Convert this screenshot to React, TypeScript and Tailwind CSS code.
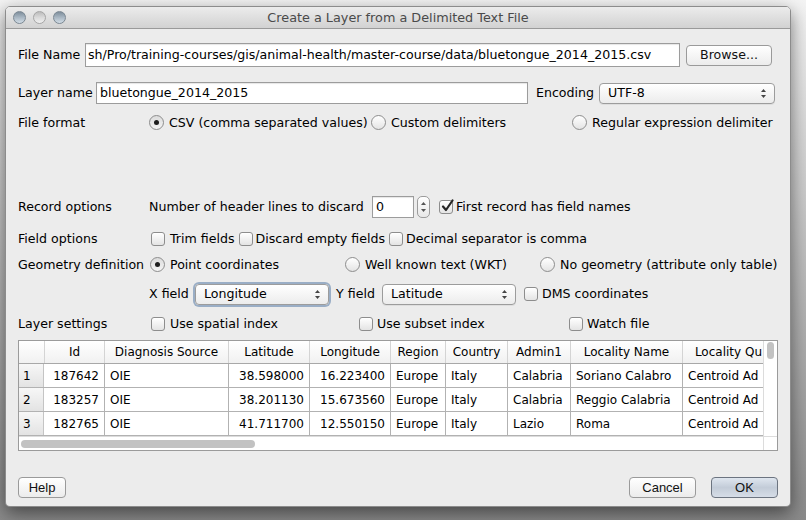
import React from "react";

const ui = "font-['DejaVu_Sans',sans-serif]";

function Checkbox({ checked = false }: { checked?: boolean }) {
  return (
    <span className="relative inline-flex w-[14px] h-[14px] shrink-0 rounded-[3px] border border-[#8d8d8d] bg-gradient-to-b from-white to-[#e4e4e4] shadow-[inset_0_1px_0_#fff]">
      {checked && (
        <svg className="absolute left-[1px] -top-[2px]" width="13" height="14" viewBox="0 0 13 14">
          <path d="M2 7.5 L5 11 L11.5 1.5" fill="none" stroke="#262626" strokeWidth="2.2" strokeLinecap="round" strokeLinejoin="round" />
        </svg>
      )}
    </span>
  );
}

function Radio({ checked = false }: { checked?: boolean }) {
  return (
    <span
      className={`inline-flex items-center justify-center w-[15px] h-[15px] shrink-0 rounded-full border border-[#8d8d8d] bg-gradient-to-b ${
        checked ? "from-[#dcdcdc] to-[#f4f4f4]" : "from-white to-[#e4e4e4]"
      }`}
    >
      {checked && <span className="w-[5px] h-[5px] rounded-full bg-[#1e1e1e]" />}
    </span>
  );
}

function Arrows() {
  return (
    <svg width="7" height="11" viewBox="0 0 7 11">
      <path d="M3.5 1 L6 4 L1 4 Z" fill="#444" />
      <path d="M3.5 10 L6 7 L1 7 Z" fill="#444" />
    </svg>
  );
}

function Select({ value, w, focused = false }: { value: string; w: string; focused?: boolean }) {
  return (
    <div
      className={`${w} h-[21px] flex items-center justify-between pl-[8px] pr-[7px] rounded-[4px] border border-[#9c9c9c] bg-gradient-to-b from-white to-[#ececec] ${
        focused ? "shadow-[0_0_0_2px_#9aaec6]" : "shadow-[0_1px_0_rgba(0,0,0,0.06)]"
      }`}
    >
      <span>{value}</span>
      <Arrows />
    </div>
  );
}

function Button({ label, w, primary = false, narrow = true }: { label: string; w: string; primary?: boolean; narrow?: boolean }) {
  return (
    <div
      className={`${w} h-[21px] flex items-center justify-center rounded-[4px] border text-[#111] ${
        narrow ? "font-['Liberation_Sans',sans-serif] text-[13px]" : ""
      } ${
        primary
          ? "border-[#6c7480] bg-gradient-to-b from-[#dfe6ef] via-[#c3ccd8] to-[#d6dde7]"
          : "border-[#9a9a9a] bg-gradient-to-b from-white to-[#ececec]"
      }`}
    >
      {label}
    </div>
  );
}

const cols = [
  { w: "w-[61px]", h: "Id", align: "text-right" },
  { w: "w-[124px]", h: "Diagnosis Source", align: "text-left" },
  { w: "w-[81px]", h: "Latitude", align: "text-right" },
  { w: "w-[81px]", h: "Longitude", align: "text-right" },
  { w: "w-[55px]", h: "Region", align: "text-left" },
  { w: "w-[62px]", h: "Country", align: "text-left" },
  { w: "w-[63px]", h: "Admin1", align: "text-left" },
  { w: "w-[112px]", h: "Locality Name", align: "text-left" },
  { w: "w-[81px]", h: "Locality Qu", align: "text-left" },
];

const rows = [
  ["187642", "OIE", "38.598000", "16.223400", "Europe", "Italy", "Calabria", "Soriano Calabro", "Centroid Ad"],
  ["183257", "OIE", "38.201130", "15.673560", "Europe", "Italy", "Calabria", "Reggio Calabria", "Centroid Ad"],
  ["182765", "OIE", "41.711700", "12.550150", "Europe", "Italy", "Lazio", "Roma", "Centroid Ad"],
];

function PreviewTable() {
  return (
    <div className="mt-[6px] w-[760px] h-[111px] border border-[#9b9b9b] bg-white text-[12px] flex flex-col">
      <div className="flex h-[95px]">
        <div className="w-[745px] h-[95px] overflow-hidden">
          {/* header */}
          <div className="flex h-[23px] border-b border-[#a8a8a8] bg-gradient-to-b from-white to-[#f1f1f1]">
            <div className="w-[25px] shrink-0" />
            {cols.map((c, i) => (
              <div
                key={c.h}
                className={`${c.w} shrink-0 flex items-center whitespace-nowrap overflow-hidden ${
                  i < cols.length - 1 ? "border-r border-[#d4d4d4] justify-center" : "justify-end pr-[2px]"
                } ${i === 0 ? "border-l border-[#d4d4d4]" : ""}`}
              >
                {c.h}
              </div>
            ))}
          </div>
          {rows.map((r, ri) => (
            <div key={ri} className="flex h-[24px] border-b border-[#b2b2b2]">
              <div className="w-[25px] shrink-0 flex items-center pl-[4px] border-r border-[#c4c4c4] bg-gradient-to-b from-[#f7f7f7] to-[#e3e3e3]">
                {ri + 1}
              </div>
              {r.map((v, ci) => (
                <div
                  key={ci}
                  className={`${cols[ci].w} shrink-0 flex items-center px-[5px] whitespace-nowrap overflow-hidden ${
                    ci < r.length - 1 ? "border-r border-[#b2b2b2]" : ""
                  } ${cols[ci].align === "text-right" ? "justify-end" : "justify-start"}`}
                >
                  {v}
                </div>
              ))}
            </div>
          ))}
        </div>
        <div className="w-[14px] h-[95px] border-l border-[#dcdcdc] bg-white flex justify-center pt-[1px]">
          <div className="w-[7px] h-[17px] rounded-full bg-[#c2c2c2]" />
        </div>
      </div>
      <div className="flex h-[14px] border-t border-[#dcdcdc]">
        <div className="w-[745px] flex items-center pl-[2px]">
          <div className="w-[234px] h-[8px] rounded-full bg-[#c2c2c2]" />
        </div>
        <div className="w-[14px] border-l border-[#dcdcdc]" />
      </div>
    </div>
  );
}

export default function App() {
  return (
    <div className={`w-[806px] h-[520px] overflow-hidden bg-gradient-to-b from-[#f4f4f4] via-[#bdbdbd] to-[#8a8a8a] pt-[6px] pl-[5px] ${ui} text-[12.6px] text-black`}>
      <div className="w-[786px] h-[501px] rounded-[5px] overflow-hidden flex flex-col shadow-[0_6px_18px_rgba(0,0,0,0.5)] border border-[#8c8c8c]">
        {/* title bar */}
        <div className="relative h-[22px] shrink-0 flex items-center justify-center pt-[1px] bg-gradient-to-b from-[#ececec] to-[#d2d2d2] border-b border-[#9a9a9a] text-[#4a4a4a] text-[12.8px]">
          <div className="absolute left-[7px] top-[4px] flex gap-[7px]">
            <span className="w-[13px] h-[13px] rounded-full border border-[#7a8792] bg-gradient-to-b from-[#7e8e9c] via-[#a9b7c3] to-[#d2dde6]" />
            <span className="w-[13px] h-[13px] rounded-full border border-[#a5a5a5] bg-gradient-to-b from-[#bcbcbc] via-[#dadada] to-[#f0f0f0]" />
            <span className="w-[13px] h-[13px] rounded-full border border-[#7a8792] bg-gradient-to-b from-[#7e8e9c] via-[#a9b7c3] to-[#d2dde6]" />
          </div>
          <span>Create a Layer from a Delimited Text File</span>
        </div>

        {/* body */}
        <div className="flex-1 bg-[#ececec] pl-[12px] pr-[12px] flex flex-col">
          {/* File name */}
          <div className="mt-[14px] h-[24px] flex items-center">
            <span className="w-[67px] shrink-0">File Name</span>
            <div className="w-[595px] h-[24px] flex items-center px-[2px] border border-[#9c9c9c] bg-white overflow-hidden whitespace-nowrap shadow-[inset_0_1px_1px_rgba(0,0,0,0.1)]">
              sh/Pro/training-courses/gis/animal-health/master-course/data/bluetongue_2014_2015.csv
            </div>
            <div className="ml-[6px]">
              <Button label="Browse..." w="w-[86px]" narrow={false} />
            </div>
          </div>

          {/* Layer name */}
          <div className="mt-[14px] h-[24px] flex items-center">
            <span className="w-[78px] shrink-0">Layer name</span>
            <div className="w-[432px] h-[22px] flex items-center px-[3px] border border-[#9c9c9c] bg-white shadow-[inset_0_1px_1px_rgba(0,0,0,0.1)]">
              bluetongue_2014_2015
            </div>
            <span className="ml-[8px] w-[63px] shrink-0">Encoding</span>
            <Select value="UTF-8" w="w-[176px]" />
          </div>

          {/* File format */}
          <div className="mt-[8px] h-[20px] flex items-center">
            <span className="w-[131px] shrink-0">File format</span>
            <div className="w-[222px] shrink-0 flex items-center gap-[5px]">
              <Radio checked />
              <span>CSV (comma separated values)</span>
            </div>
            <div className="w-[201px] shrink-0 flex items-center gap-[5px]">
              <Radio />
              <span>Custom delimiters</span>
            </div>
            <div className="flex items-center gap-[5px] whitespace-nowrap">
              <Radio />
              <span>Regular expression delimiter</span>
            </div>
          </div>

          {/* Record options */}
          <div className="mt-[63px] h-[22px] flex items-center">
            <span className="w-[131px] shrink-0">Record options</span>
            <span className="w-[223px] shrink-0">Number of header lines to discard</span>
            <div className="w-[42px] h-[22px] flex items-center px-[3px] border border-[#9c9c9c] bg-white shadow-[inset_0_1px_1px_rgba(0,0,0,0.1)]">
              0
            </div>
            <div className="ml-[3px] w-[13px] h-[22px] flex items-center justify-center rounded-[5px] border border-[#9c9c9c] bg-gradient-to-b from-white to-[#e8e8e8]">
              <svg width="7" height="14" viewBox="0 0 7 14">
                <path d="M3.5 2 L6 5 L1 5 Z" fill="#555" />
                <path d="M3.5 12 L6 9 L1 9 Z" fill="#555" />
              </svg>
            </div>
            <div className="ml-[9px] flex items-center gap-[3px]">
              <Checkbox checked />
              <span>First record has field names</span>
            </div>
          </div>

          {/* Field options */}
          <div className="mt-[11px] h-[20px] flex items-center">
            <span className="w-[133px] shrink-0">Field options</span>
            <div className="flex items-center gap-[5px]">
              <Checkbox />
              <span>Trim fields</span>
            </div>
            <div className="ml-[4px] flex items-center gap-[3px]">
              <Checkbox />
              <span>Discard empty fields</span>
            </div>
            <div className="ml-[4px] flex items-center gap-[3px]">
              <Checkbox />
              <span>Decimal separator is comma</span>
            </div>
          </div>

          {/* Geometry definition */}
          <div className="mt-[6px] h-[20px] flex items-center">
            <span className="w-[132px] shrink-0">Geometry definition</span>
            <div className="w-[195px] shrink-0 flex items-center gap-[5px]">
              <Radio checked />
              <span>Point coordinates</span>
            </div>
            <div className="w-[195px] shrink-0 flex items-center gap-[5px]">
              <Radio />
              <span>Well known text (WKT)</span>
            </div>
            <div className="flex items-center gap-[5px] whitespace-nowrap">
              <Radio />
              <span>No geometry (attribute only table)</span>
            </div>
          </div>

          {/* X / Y field */}
          <div className="mt-[8px] h-[22px] flex items-center">
            <span className="w-[131px] shrink-0" />
            <span className="w-[46px] shrink-0">X field</span>
            <Select value="Longitude" w="w-[134px]" focused />
            <span className="ml-[7px] w-[46px] shrink-0">Y field</span>
            <Select value="Latitude" w="w-[134px]" />
            <div className="ml-[8px] flex items-center gap-[4px]">
              <Checkbox />
              <span>DMS coordinates</span>
            </div>
          </div>

          {/* Layer settings */}
          <div className="mt-[9px] h-[20px] flex items-center">
            <span className="w-[133px] shrink-0">Layer settings</span>
            <div className="w-[208px] shrink-0 flex items-center gap-[5px]">
              <Checkbox />
              <span>Use spatial index</span>
            </div>
            <div className="w-[210px] shrink-0 flex items-center gap-[4px]">
              <Checkbox />
              <span>Use subset index</span>
            </div>
            <div className="flex items-center gap-[4px]">
              <Checkbox />
              <span>Watch file</span>
            </div>
          </div>

          <PreviewTable />

          {/* buttons */}
          <div className="mt-[26px] h-[21px] flex items-center">
            <Button label="Help" w="w-[48px]" />
            <div className="flex-1" />
            <Button label="Cancel" w="w-[67px]" />
            <div className="ml-[15px]">
              <Button label="OK" w="w-[67px]" primary />
            </div>
          </div>
        </div>
      </div>
    </div>
  );
}
